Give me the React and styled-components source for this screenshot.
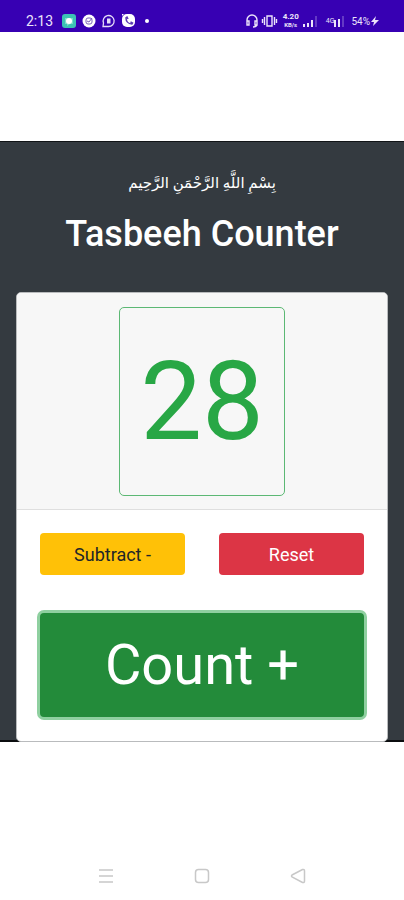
import React, { useState } from 'react';
import styled, { createGlobalStyle } from 'styled-components';

const GlobalStyle = createGlobalStyle`
  * {
    box-sizing: border-box;
  }

  body {
    margin: 0;
    background: #fff;
    font-family: Roboto, 'DejaVu Sans', sans-serif;
  }
`;

const Screen = styled.div`
  min-height: 100vh;
  display: flex;
  flex-direction: column;
`;

const StatusBar = styled.header`
  height: 32px;
  padding: 9px 25px 0 26px;
  display: flex;
  justify-content: space-between;
  background: #3700b3;
  color: #ece4fa;
`;

const StatusGroup = styled.div`
  height: 24px;
  display: flex;
  align-items: center;
  gap: 4px;

  svg {
    display: block;
    flex: none;
  }
`;

const Time = styled.span`
  margin-right: 4px;
  font-size: 14px;
`;

const Battery = styled.span`
  margin-left: 2px;
  display: flex;
  align-items: center;
  gap: 1px;
  font-size: 10px;
`;

const Speed = styled.span`
  display: flex;
  flex-direction: column;
  align-items: center;
  font-size: 8px;
  font-weight: 700;
  line-height: 8px;

  small {
    font-size: 6px;
    line-height: 8px;
  }
`;

const Network = styled.span`
  margin-left: 4px;
  display: flex;
  align-items: center;
  font-size: 7px;
`;

const Main = styled.main`
  margin-top: 109px;
  padding: 0 16px;
  background: #343a40;
  border-top: 1px solid #111417;
  box-shadow: inset 0 -2px 0 #0b0d0f;
`;

const Heading = styled.div`
  padding: 27px 0 36px;
  text-align: center;
  color: #fff;

  p {
    margin: 0;
    font-size: 15px;
    line-height: 28px;
  }

  h1 {
    margin: 15px 0 0;
    font-size: 36px;
    font-weight: 500;
    line-height: 44px;
  }
`;

const Card = styled.section`
  overflow: hidden;
  background: #fff;
  border: 1px solid #b9bbbd;
  border-radius: 5px;
`;

const CardHeader = styled.div`
  padding: 14px 14px 13px;
  display: flex;
  justify-content: center;
  background: #f7f7f7;
  border-bottom: 1px solid #dfdfdf;
`;

const Display = styled.output`
  padding: 0 20px;
  border: 1px solid #5cb874;
  border-radius: 5px;
  color: #28a745;
  font-size: 110px;
  line-height: 187px;
`;

const CardBody = styled.div`
  padding: 23px 23px 24px;
  display: grid;
  grid-template-columns: 1fr 1fr;
  gap: 38px 34px;
`;

const Button = styled.button`
  height: 42px;
  padding: 0;
  border: 0;
  border-radius: 4px;
  background: ${props => props.$background};
  color: ${props => props.$color};
  font-family: inherit;
  font-size: 18px;
  cursor: pointer;
`;

const CountButton = styled(Button)`
  grid-column: 1 / -1;
  height: 104px;
  font-size: 56px;
  box-shadow: 0 0 0 3px #8fd0a0;
`;

const NavBar = styled.nav`
  height: 48px;
  margin-top: auto;
  padding: 0 58px;
  display: grid;
  grid-template-columns: repeat(3, 1fr);
`;

const NavButton = styled.button`
  padding: 0;
  display: flex;
  justify-content: center;
  align-items: center;
  border: 0;
  background: none;
  color: #c8c8c8;
`;

const AppIcons = () => (
  <svg width="88" height="16" viewBox="0 0 88 16" fill="none" aria-hidden="true">
    <rect x="1" y="1" width="14" height="14" rx="3" fill="#3cc4b4" />
    <path d="M4 5h8v6H9l-3 2v-2H4z" fill="#78dccb" />
    <circle cx="8" cy="8" r="3" fill="#fff" />

    <circle cx="28" cy="8" r="6.5" fill="#fff" />
    <rect x="25" y="5" width="6" height="6" rx="2" stroke="#7b62b8" />
    <path d="m26 8 2 1 3-4" stroke="#7b62b8" />

    <path d="M42 13.500h5.500a5.500 5.500 0 1 0-5-3.500z" stroke="#e5dcf8" strokeWidth="1.300" />
    <path d="M46 5.500h3.500v5H46z" fill="#e5dcf8" />

    <rect x="61" y="1" width="13" height="13" rx="5" fill="#fff" />
    <path d="M61 5c0-3 1-4 4-4h-4z" fill="#fff" />
    <path d="M65 5c0 3 2 6 6 6M64.500 5l1.500-1 1 2M69.500 9l2 1-1 1.500" stroke="#5a38b4" strokeWidth="1.500" />

    <circle cx="86" cy="8" r="2" fill="#fff" />
  </svg>
);

const DeviceIcons = () => (
  <svg width="34" height="14" viewBox="0 0 34 14" fill="none" stroke="currentColor" strokeWidth="1.400" aria-hidden="true">
    <path d="M2 10V6a5 5 0 0 1 10 0v4c0 2-1 3-4 3M2 7h2v4H2zM10 7h2v4h-2z" />
    <path d="M22 2h5v10h-5zM19.500 3v8M29.500 3v8M17.500 5v4M31.500 5v4" />
  </svg>
);

const Signal = ({ heights, faded }) => (
  <svg width={heights.length * 4 - 1} height="12" viewBox={`0 0 ${heights.length * 4 - 1} 12`} fill="currentColor" aria-hidden="true">
    {heights.map((h, i) => (
      <rect key={i} x={i * 4} y={12 - h} width="2" height={h} opacity={i === faded ? 0.25 : 1} />
    ))}
  </svg>
);

const Bolt = () => (
  <svg width="8" height="12" viewBox="0 0 8 12" fill="currentColor" aria-hidden="true">
    <path d="M5 1 0 7h3l-1 4 6-6H4z" />
  </svg>
);

const App = () => {
  const [count, setCount] = useState(28);

  return (
    <Screen>
      <GlobalStyle />
      <StatusBar>
        <StatusGroup>
          <Time>2:13</Time>
          <AppIcons />
        </StatusGroup>
        <StatusGroup>
          <DeviceIcons />
          <Speed>
            4.20
            <small>KB/s</small>
          </Speed>
          <Signal heights={[3, 4, 7, 11]} faded={3} />
          <Network>
            4G
            <Signal heights={[7, 8, 11]} faded={2} />
          </Network>
          <Battery>
            54%
            <Bolt />
          </Battery>
        </StatusGroup>
      </StatusBar>

      <Main>
        <Heading>
          <p lang="ar" dir="rtl">بِسْمِ اللَّهِ الرَّحْمَنِ الرَّحِيم</p>
          <h1>Tasbeeh Counter</h1>
        </Heading>

        <Card>
          <CardHeader>
            <Display>{count}</Display>
          </CardHeader>
          <CardBody>
            <Button
              type="button"
              $background="#ffc107"
              $color="#212529"
              onClick={() => setCount(Math.max(0, count - 1))}
            >
              Subtract -
            </Button>
            <Button type="button" $background="#dc3545" $color="#fff" onClick={() => setCount(0)}>
              Reset
            </Button>
            <CountButton type="button" $background="#238b3a" $color="#fff" onClick={() => setCount(count + 1)}>
              Count +
            </CountButton>
          </CardBody>
        </Card>
      </Main>

      <NavBar>
        <NavButton type="button" aria-label="Recent apps">
          <svg width="16" height="16" viewBox="0 0 16 16" stroke="currentColor" strokeWidth="1.500">
            <path d="M1 2h14M1 8h14M1 14h14" />
          </svg>
        </NavButton>
        <NavButton type="button" aria-label="Home">
          <svg width="16" height="16" viewBox="0 0 16 16" fill="none" stroke="currentColor" strokeWidth="1.500">
            <rect x="1.500" y="1.500" width="13" height="13" rx="3" />
          </svg>
        </NavButton>
        <NavButton type="button" aria-label="Back">
          <svg width="16" height="16" viewBox="0 0 16 16" fill="none" stroke="currentColor" strokeWidth="1.500">
            <path d="M2 7 12.500 1.500Q14.500 1 14.500 3v10q0 2-2 1.500L2 9Q1 8 2 7z" />
          </svg>
        </NavButton>
      </NavBar>
    </Screen>
  );
};

export default App;
